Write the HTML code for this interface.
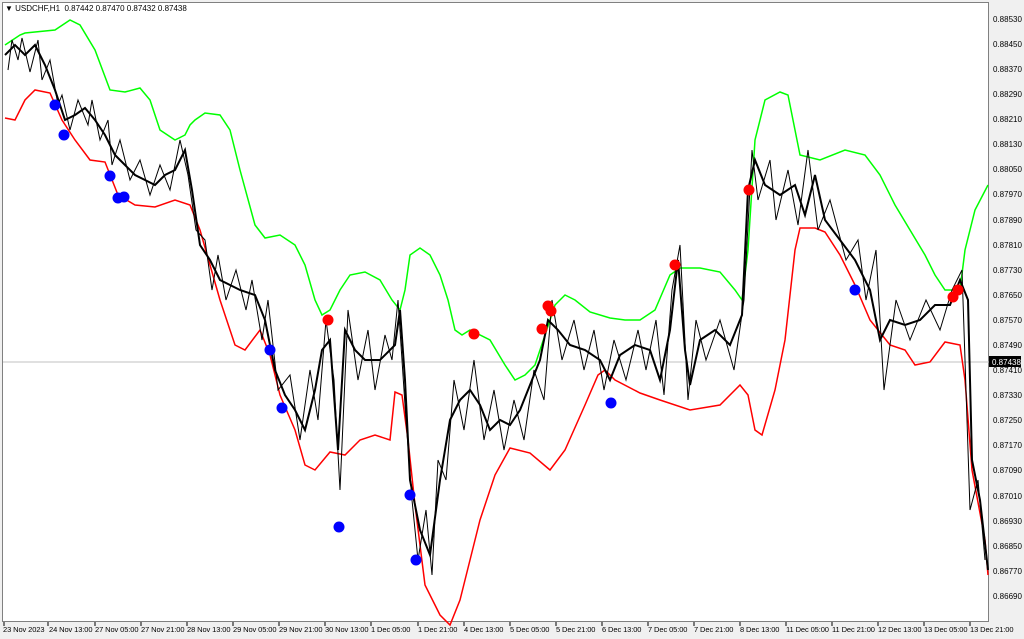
<!DOCTYPE html>
<html><head><meta charset="utf-8"><style>
body{margin:0;width:1024px;height:639px;background:#f0f0f0;overflow:hidden;font-family:"Liberation Sans",sans-serif;}
.c{position:absolute;left:2px;top:2px;width:987px;height:620px;background:#fff;border:1px solid #808080;box-sizing:border-box}
.p{position:absolute;left:993px;font-size:8px;color:#000}
.d{position:absolute;top:625px;font-size:7.5px;color:#000;white-space:nowrap;letter-spacing:-0.1px}
.t{position:absolute;left:5px;top:4px;font-size:8px}
</style></head><body>
<div class="c"></div>
<svg width="1024" height="639" style="position:absolute;left:0;top:0">
<line x1="3" y1="362" x2="989" y2="362" stroke="#c0c0c0" stroke-width="1"/>
<g stroke="#000" stroke-width="1">
<line x1="4" y1="622" x2="4" y2="626"/><line x1="48" y1="622" x2="48" y2="626"/><line x1="95" y1="622" x2="95" y2="626"/><line x1="141" y1="622" x2="141" y2="626"/><line x1="187" y1="622" x2="187" y2="626"/><line x1="233" y1="622" x2="233" y2="626"/><line x1="279" y1="622" x2="279" y2="626"/><line x1="325" y1="622" x2="325" y2="626"/><line x1="371" y1="622" x2="371" y2="626"/><line x1="418" y1="622" x2="418" y2="626"/><line x1="464" y1="622" x2="464" y2="626"/><line x1="510" y1="622" x2="510" y2="626"/><line x1="556" y1="622" x2="556" y2="626"/><line x1="602" y1="622" x2="602" y2="626"/><line x1="648" y1="622" x2="648" y2="626"/><line x1="694" y1="622" x2="694" y2="626"/><line x1="740" y1="622" x2="740" y2="626"/><line x1="786" y1="622" x2="786" y2="626"/><line x1="832" y1="622" x2="832" y2="626"/><line x1="878" y1="622" x2="878" y2="626"/><line x1="924" y1="622" x2="924" y2="626"/><line x1="970" y1="622" x2="970" y2="626"/>
</g>
<polyline fill="none" stroke="#00ff00" stroke-width="1.5" points="5,45 20,35 25,33 55,30 70,20 80,25 95,50 110,90 125,92 140,88 150,100 160,130 175,140 185,135 190,125 195,120 205,113 220,115 230,130 240,170 255,225 265,238 280,235 295,245 305,265 315,300 322,315 330,310 340,290 350,275 365,272 380,280 392,300 400,310 405,290 410,255 420,248 430,255 440,275 448,300 455,330 462,335 470,330 490,340 505,365 515,380 525,375 535,365 545,335 555,305 565,295 575,300 590,312 610,318 625,320 640,320 655,310 670,275 680,268 700,268 720,272 735,290 742,300 748,250 755,140 765,100 780,92 788,95 795,130 800,155 820,160 845,150 865,155 880,175 895,205 910,230 925,255 935,275 945,290 960,290 965,250 975,210 988,185"/>
<polyline fill="none" stroke="#ff0000" stroke-width="1.5" points="5,118 15,120 25,100 35,90 50,93 62,120 75,140 90,160 105,162 118,195 135,205 155,207 175,200 190,205 200,230 210,265 220,300 235,345 245,350 260,330 270,355 280,395 295,430 305,465 315,470 330,452 345,455 360,440 375,435 390,440 395,392 402,395 408,440 415,505 425,585 440,615 450,625 460,600 470,560 480,520 495,475 510,448 530,453 550,470 565,450 585,405 598,375 605,370 615,380 640,393 660,400 690,410 720,405 740,385 748,395 755,430 762,435 775,390 785,340 795,250 800,228 815,228 825,232 840,255 855,285 870,320 890,345 905,350 915,365 930,362 945,342 960,345 965,380 972,470 985,540 988,575"/>
<g fill="none" stroke="#000">
<polyline stroke-width="2" points="5,55 15,45 25,55 35,45 45,65 55,90 65,120 75,115 85,108 95,120 105,135 115,155 125,165 135,175 145,180 155,185 165,175 175,170 185,150 192,190 200,245 210,260 220,280 230,285 240,290 255,295 265,320 275,370 285,395 295,410 305,430 315,390 322,350 330,340 338,450 345,330 355,350 365,360 380,360 395,345 400,310 405,380 410,480 420,530 430,555 440,480 450,420 460,400 470,390 480,405 490,430 500,420 510,425 520,410 530,385 540,360 548,320 558,330 570,345 585,350 600,360 610,380 620,355 635,345 650,350 660,380 670,330 678,260 685,350 690,385 700,340 715,330 730,345 742,315 748,190 755,160 765,185 780,195 795,185 805,215 815,175 825,220 840,240 855,260 870,290 880,340 890,320 905,325 920,320 935,305 950,305 960,280 968,300 972,460 980,500 988,570"/>
<polyline stroke-width="1" points="8,70 12,40 18,60 22,38 30,72 38,40 42,80 50,60 58,105 62,95 70,130 78,100 88,125 92,100 100,140 108,120 112,165 120,140 130,180 140,160 150,195 160,165 170,190 180,140 188,175 196,230 205,240 212,290 218,255 226,300 236,270 246,310 252,280 262,340 268,300 278,390 290,375 300,440 310,370 318,420 326,320 334,380 340,490 348,310 358,380 368,330 375,390 385,335 392,360 398,300 406,420 412,500 418,560 426,510 432,575 438,460 446,480 454,380 464,430 474,360 484,440 494,390 504,450 514,400 524,440 534,370 544,400 552,300 562,360 574,320 584,370 594,330 604,390 614,340 626,380 638,330 646,370 656,320 664,395 672,290 680,245 688,400 696,320 706,360 720,320 734,370 744,300 752,150 758,200 770,160 776,220 788,170 798,225 808,150 818,230 830,200 846,260 858,240 866,300 876,250 884,390 896,300 910,340 926,300 940,330 952,290 962,270 970,510 978,480 985,560"/>
</g>
<g fill="#0000ff"><circle cx="55" cy="105" r="5.5"/><circle cx="64" cy="135" r="5.5"/><circle cx="110" cy="176" r="5.5"/><circle cx="118" cy="198" r="5.5"/><circle cx="124" cy="197" r="5.5"/><circle cx="270" cy="350" r="5.5"/><circle cx="282" cy="408" r="5.5"/><circle cx="339" cy="527" r="5.5"/><circle cx="410" cy="495" r="5.5"/><circle cx="416" cy="560" r="5.5"/><circle cx="611" cy="403" r="5.5"/><circle cx="855" cy="290" r="5.5"/></g>
<g fill="#ff0000"><circle cx="328" cy="320" r="5.5"/><circle cx="474" cy="334" r="5.5"/><circle cx="542" cy="329" r="5.5"/><circle cx="548" cy="306" r="5.5"/><circle cx="551" cy="311" r="5.5"/><circle cx="675" cy="265" r="5.5"/><circle cx="749" cy="190" r="5.5"/><circle cx="953" cy="297" r="5.5"/><circle cx="958" cy="290" r="5.5"/></g>
<rect x="989" y="356" width="32" height="11" fill="#000"/>
<text x="992" y="365" font-size="8" fill="#fff" font-family="Liberation Sans">0.87438</text>
</svg>
<div class="t">▼ USDCHF,H1 &nbsp;0.87442 0.87470 0.87432 0.87438</div>
<div class="p" style="top:15px">0.88530</div><div class="p" style="top:40px">0.88450</div><div class="p" style="top:65px">0.88370</div><div class="p" style="top:90px">0.88290</div><div class="p" style="top:115px">0.88210</div><div class="p" style="top:140px">0.88130</div><div class="p" style="top:165px">0.88050</div><div class="p" style="top:190px">0.87970</div><div class="p" style="top:216px">0.87890</div><div class="p" style="top:241px">0.87810</div><div class="p" style="top:266px">0.87730</div><div class="p" style="top:291px">0.87650</div><div class="p" style="top:316px">0.87570</div><div class="p" style="top:341px">0.87490</div><div class="p" style="top:366px">0.87410</div><div class="p" style="top:391px">0.87330</div><div class="p" style="top:416px">0.87250</div><div class="p" style="top:441px">0.87170</div><div class="p" style="top:466px">0.87090</div><div class="p" style="top:492px">0.87010</div><div class="p" style="top:517px">0.86930</div><div class="p" style="top:542px">0.86850</div><div class="p" style="top:567px">0.86770</div><div class="p" style="top:592px">0.86690</div>
<div class="d" style="left:3px">23 Nov 2023</div><div class="d" style="left:49px">24 Nov 13:00</div><div class="d" style="left:95px">27 Nov 05:00</div><div class="d" style="left:141px">27 Nov 21:00</div><div class="d" style="left:187px">28 Nov 13:00</div><div class="d" style="left:233px">29 Nov 05:00</div><div class="d" style="left:279px">29 Nov 21:00</div><div class="d" style="left:325px">30 Nov 13:00</div><div class="d" style="left:371px">1 Dec 05:00</div><div class="d" style="left:418px">1 Dec 21:00</div><div class="d" style="left:464px">4 Dec 13:00</div><div class="d" style="left:510px">5 Dec 05:00</div><div class="d" style="left:556px">5 Dec 21:00</div><div class="d" style="left:602px">6 Dec 13:00</div><div class="d" style="left:648px">7 Dec 05:00</div><div class="d" style="left:694px">7 Dec 21:00</div><div class="d" style="left:740px">8 Dec 13:00</div><div class="d" style="left:786px">11 Dec 05:00</div><div class="d" style="left:832px">11 Dec 21:00</div><div class="d" style="left:878px">12 Dec 13:00</div><div class="d" style="left:924px">13 Dec 05:00</div><div class="d" style="left:970px">13 Dec 21:00</div>
</body></html>
